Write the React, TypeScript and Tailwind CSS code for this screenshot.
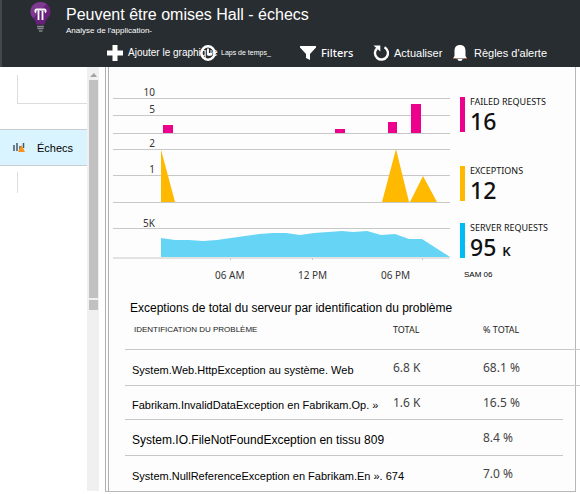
import type { ReactNode } from "react";

const UI = "font-['Noto_Sans',sans-serif]";

function Header() {
  return (
    <header className="h-[67px] border-l-2 border-[#43484c] bg-[#282d31] text-white">
      <div className="flex h-10 items-start">
        <svg className="mt-[2px] ml-[28px] h-[31px] w-[21px] shrink-0" viewBox="0 0 21 31" aria-hidden="true">
          <path d="M10.500 0C4.500 0 .5 4.300.5 9.800c0 4 2.300 5.700 4.100 8.200 1 1.500 1.300 2.600 1.600 4.500h8.600c.3-1.900.6-3 1.600-4.500 1.800-2.500 4.100-4.200 4.100-8.200C20.500 4.300 16.500 0 10.500 0Z" fill="#68217a" />
          <path d="M10.500 0C4.500 0 .5 4.300.5 9.800c0 3 1.300 4.700 2.700 6.400L16.500 1.900C14.800.7 12.800 0 10.500 0Z" fill="#7c3a90" />
          <path d="M8.500 18V8.500M12.500 18V8.500" fill="none" stroke="#fff" strokeWidth="1.800" />
          <path d="M6 10.500C5 9.500 5 7.500 6.500 7.500h8c1.500 0 1.500 2 .5 3" fill="none" stroke="#fff" strokeWidth="1.800" />
          <path d="M7 24.500h7M7.500 26.500h6M9 29h3.500" stroke="#85888a" strokeWidth="1.500" />
        </svg>
        <div className="ml-[15px] font-['Liberation_Sans',Arial,sans-serif]">
          <h1 className="mt-[5px] text-[16px] leading-5 whitespace-nowrap">Peuvent être omises Hall - échecs</h1>
          <p className="text-[8px] leading-3 whitespace-nowrap">Analyse de l'application-</p>
        </div>
      </div>
      <nav className="flex pl-[105px] font-['Liberation_Sans',Arial,sans-serif] leading-6 whitespace-nowrap">
        <Tool width="w-[93px]" label="Ajouter le graphique" text="text-[10px]">
          <path d="M8 0v16M0 8h16" stroke="#fff" strokeWidth="5" />
        </Tool>
        <Tool width="w-[100px]" label="Laps de temps_" text="text-[7px]">
          <circle cx="8" cy="8" r="6.700" fill="none" stroke="#fff" strokeWidth="2.500" />
          <path d="M8 3.500V9h4" fill="none" stroke="#fff" strokeWidth="1.800" />
        </Tool>
        <Tool width="w-[73px]" label="Filters" text="font-['Noto_Sans',sans-serif] text-[11px] font-medium">
          <path d="M0 1h16v1.500L10 9v6l-4-2V9L0 2.500Z" fill="#fff" />
        </Tool>
        <Tool width="w-[80px]" label="Actualiser" text="text-[11px]">
          <path d="M11.500 2.300A6.500 6.500 0 1 1 4 3.300" fill="none" stroke="#fff" strokeWidth="2.400" />
          <path d="M.5.5h6.800v6Z" fill="#fff" />
        </Tool>
        <Tool width="w-[100px]" label="Règles d'alerte" text="text-[11px]">
          <path d="M1.500 11V6c0-4 2-6 5.500-6s5.500 2 5.500 6v5l1.500 2.500H0Z" fill="#fff" />
          <path d="M0 13.500h3M11 13.500h3" stroke="#b5613a" />
          <path d="M4.500 14h5c0 1.300-1 2-2.500 2s-2.500-.7-2.500-2Z" fill="#fff" />
        </Tool>
      </nav>
    </header>
  );
}

function Tool({ width, label, text, children }: { width: string; label: string; text: string; children: ReactNode }) {
  return (
    <button type="button" className={`flex shrink-0 items-center gap-[5px] ${width}`}>
      <svg className="size-4 shrink-0" viewBox="0 0 16 16" aria-hidden="true">{children}</svg>
      <span className={`pt-px ${text}`}>{label}</span>
    </button>
  );
}

function Sidebar() {
  return (
    <aside className="flex w-[99px] shrink-0">
      <div className="w-[87px]">
        <div className="mt-2 ml-[17px] h-[29px] border-b border-l border-[#dcdcdc]" />
        <a href="#echecs" className="mt-[25px] flex h-[37px] items-center border-y border-[#c8cdd0] bg-[#d9f4fe] pl-[13px] font-['Liberation_Sans',Arial,sans-serif] text-[11px] text-black">
          <svg className="mr-3 h-[10px] w-3" viewBox="0 0 12 10" aria-hidden="true">
            <path d="M1 2v6M4 0v8M7 3v5M10.500 0v5" stroke="#4a5660" strokeWidth="1.500" />
            <path d="m8.500 2 3.500 7H5Z" fill="#f7931e" />
          </svg>
          <span className="pt-[2px]">Échecs</span>
        </a>
        <div className="mt-[6px] ml-[17px] h-[21px] border-l border-[#dcdcdc]" />
      </div>
      <div className="mb-px flex w-3 flex-col items-center bg-[#f0f0f0] pt-1">
        <svg className="h-2 w-3" viewBox="0 0 12 8" aria-hidden="true">
          <path d="m3 6 4-4 3 4Z" fill="#a3a3a3" />
        </svg>
        <div className="mt-px h-[218px] w-[9px] bg-[#c1c1c1]" />
        <div className="mt-[2px] h-[10px] w-[9px] bg-[#c1c1c1]" />
      </div>
    </aside>
  );
}

type Label = { text: string; place: string };

function ChartRow({ height, box, labels, title, value, unit, color, children }: {
  height: string; box: string; labels: Label[]; title: string; value: string; unit?: string; color: string; children: ReactNode;
}) {
  return (
    <div className={`flex items-end ${height}`}>
      <div className={`relative flex-1 self-stretch ${UI}`}>
        <svg className="size-full" viewBox={box} preserveAspectRatio="none" aria-hidden="true">{children}</svg>
        {labels.map((l) => (
          <span key={l.text} className={`absolute left-0 w-[42px] text-right text-[10px] leading-3 text-[#333] ${l.place}`}>{l.text}</span>
        ))}
      </div>
      <div className={`mb-[2px] ml-[10px] flex h-[35px] w-[115px] ${UI}`}>
        <div className={`w-[5px] shrink-0 ${color}`} />
        <div className="pl-[5px] whitespace-nowrap text-[#111]">
          <div className="text-[9px] leading-[10px]">{title}</div>
          <div className="text-[23px] leading-7 font-medium">
            {value}
            {unit && <span className="ml-[6px] text-[13px] font-semibold">{unit}</span>}
          </div>
        </div>
      </div>
    </div>
  );
}

const rows = [
  { name: "System.Web.HttpException au système. Web", total: "6.8 K", share: "68.1 %", size: "h-9", text: "text-[11px]", wide: true },
  { name: "Fabrikam.InvalidDataException en Fabrikam.Op. »", total: "1.6 K", share: "16.5 %", size: "h-[34px]", text: "text-[11px]", wide: false },
  { name: "System.IO.FileNotFoundException en tissu 809", total: "", share: "8.4 %", size: "h-9", text: "text-[12px]", wide: false },
  { name: "System.NullReferenceException en Fabrikam.En ». 674", total: "", share: "7.0 %", size: "h-[35px]", text: "text-[11px]", wide: false },
];

function ProblemTable() {
  const line = "border-b border-[#c8c8c8]";
  return (
    <section className="pl-[12px]">
      <h2 className="pl-[5px] font-['Liberation_Sans',Arial,sans-serif] text-[12px] leading-4 whitespace-nowrap text-black">
        Exceptions de total du serveur par identification du problème
      </h2>
      <table className="-mr-[5px] w-[calc(100%+5px)] table-fixed border-separate border-spacing-0 text-left whitespace-nowrap">
        <colgroup>
          <col className="w-[268px]" />
          <col className="w-[90px]" />
          <col />
          <col className="w-[17px]" />
        </colgroup>
        <thead>
          <tr className="h-[34px] align-top leading-[12px] text-[#222]">
            <th className={`pt-2 pl-[9px] font-['Liberation_Sans',Arial,sans-serif] text-[8px] font-normal ${line}`}>IDENTIFICATION DU PROBLÈME</th>
            <th className={`pt-2 text-[9px] font-normal ${UI} ${line}`}>TOTAL</th>
            <th className={`pt-2 text-[9px] font-normal ${UI} ${line}`}>% TOTAL</th>
            <td className={line} />
          </tr>
        </thead>
        <tbody>
          {rows.map((r, i) => {
            const rule = i < 3 ? line : "";
            return (
              <tr key={r.name} className={`${r.size} leading-4`}>
                <td className={`pt-1 pl-[7px] font-['Liberation_Sans',Arial,sans-serif] text-black ${r.text} ${rule}`}>{r.name}</td>
                <td className={`text-[12px] text-[#444] ${UI} ${rule}`}>{r.total}</td>
                <td className={`text-[12px] text-[#444] ${UI} ${rule}`}>{r.share}</td>
                <td className={r.wide ? line : ""} />
              </tr>
            );
          })}
        </tbody>
      </table>
    </section>
  );
}

export default function App() {
  return (
    <div className="overflow-hidden bg-white">
      <Header />
      <div className="flex">
        <Sidebar />
        <main className="mr-[4px] ml-[6px] min-w-0 flex-1 border-r border-b border-[#b8b8b8] bg-[#fdfdfd]">
          <div className="border-l-4 border-double border-[#b0b0b0] pt-[17px] pl-1">
            <ChartRow height="h-[50px]" box="0 0 337 50" title="FAILED REQUESTS" value="16" color="bg-[#ec008c]"
              labels={[{ text: "10", place: "top-[2px]" }, { text: "5", place: "top-[19px]" }]}>
              <path d="M0 14.500h337M0 31.500h337M0 49.500h337" stroke="#c8c8c8" />
              <path d="M50 41h10v8H50ZM222 45h10v4h-10ZM275 38h9v11h-9ZM298 20h10v29h-10Z" fill="#ec008c" />
            </ChartRow>
            <ChartRow height="h-[69px]" box="0 0 337 69" title="EXCEPTIONS" value="12" color="bg-[#ffb900]"
              labels={[{ text: "2", place: "top-[3px]" }, { text: "1", place: "top-[29px]" }]}>
              <path d="M0 15.500h337M0 41.500h337M0 68.500h337" stroke="#c8c8c8" />
              <path d="M48 15.500 62 68H48ZM283 15l-14 53h27ZM310 42l-13 26h27Z" fill="#ffb900" />
            </ChartRow>
            <ChartRow height="h-[57px]" box="0 0 337 57" title="SERVER REQUESTS" value="95" unit="K" color="bg-[#00bcf2]"
              labels={[{ text: "5K", place: "top-[14px]" }]}>
              <path d="M0 25.500h337" stroke="#c8c8c8" />
              <path d="m48 35 14 2h14l14 1 14-1 28-4 14-2 14-1h13l14 2 14-2 28-2 11 1 14-1 14 4 14-1 14 5h13l28 18H48Z" fill="#66d4f5" />
              <path d="M0 55h337M117.500 55v2M199.500 55v2M309.500 55v2" stroke="#c8c8c8" />
            </ChartRow>
            <div className={`flex h-10 pt-[9px] pl-[102px] text-[10px] leading-3 whitespace-nowrap text-[#333] ${UI}`}>
              <span className="w-[83px]">06 AM</span>
              <span className="w-[83px]">12 PM</span>
              <span className="w-[83px]">06 PM</span>
              <span className="font-['Liberation_Sans',Arial,sans-serif] text-[8px] text-black">SAM 06</span>
            </div>
            <ProblemTable />
          </div>
        </main>
      </div>
    </div>
  );
}
